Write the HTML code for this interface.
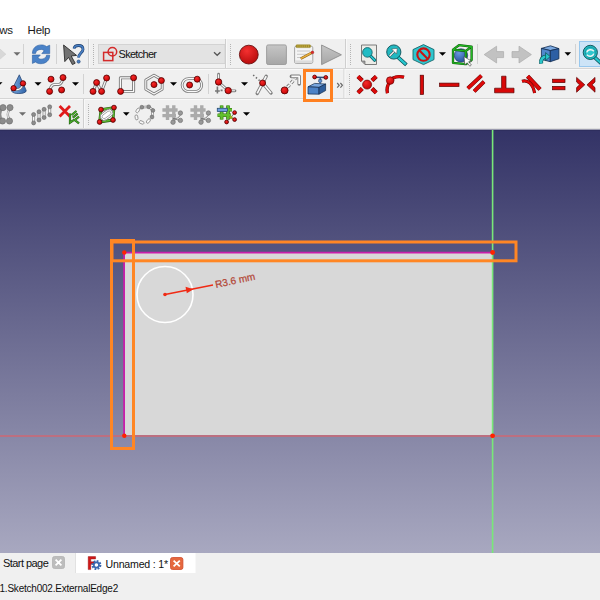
<!DOCTYPE html>
<html><head><meta charset="utf-8">
<style>
html,body{margin:0;padding:0}
body{width:600px;height:600px;overflow:hidden;position:relative;background:#f0f0f0;font-family:"Liberation Sans",sans-serif}
.a{position:absolute}
#menubar{left:0;top:0;width:600px;height:39px;background:#fff}
.mt{position:absolute;font-size:11.5px;color:#1a1a1a;top:23.5px;letter-spacing:-0.25px;white-space:nowrap}
.hl{position:absolute;left:0;width:600px;height:1px;background:#d5d5d5}
.hw{position:absolute;left:0;width:600px;height:1px;background:#f9f9f9}
#view{left:0;top:130px;width:600px;height:423px;border-top:1px solid #2e2e5e;box-sizing:border-box;background:linear-gradient(to bottom,#333366,#a8a8c0)}
svg{position:absolute;overflow:visible}
.tx{position:absolute;white-space:nowrap;color:#000}
</style></head><body>
<div id="menubar" class="a"></div>
<div class="mt" style="left:-7px">ows</div>
<div class="mt" style="left:27.6px">Help</div>
<div class="hl" style="top:68px"></div><div class="hw" style="top:69px"></div>
<div class="hl" style="top:98px"></div><div class="hw" style="top:99px"></div>
<div class="hl" style="top:128px;background:#dedede"></div><div class="hl" style="top:129px;background:#9a9aae"></div>
<div id="view" class="a"></div>
<svg width="600" height="600" style="left:0;top:0" viewBox="0 0 600 600">
  <rect x="124.5" y="252.5" width="368" height="183" fill="#d8d8d8"/>
  <line x1="124" y1="252.6" x2="492" y2="252.6" stroke="#c81eaa" stroke-width="1.6"/>
  <line x1="124.1" y1="252.5" x2="124.1" y2="435.5" stroke="#c81eaa" stroke-width="1.8"/>
  <line x1="0" y1="436" x2="600" y2="436" stroke="#bc6f80" stroke-width="2"/>
  <line x1="492.6" y1="130" x2="492.6" y2="553" stroke="#78e878" stroke-width="1.6"/>
  <circle cx="165" cy="294.5" r="28" fill="none" stroke="#fff" stroke-width="1.6"/>
  <line x1="165" y1="294.5" x2="213" y2="285" stroke="#f02a14" stroke-width="1.5"/>
  <path d="M193.5 289.2 L185.5 286.8 L186.8 293.2 Z" fill="#f02a14"/>
  <circle cx="165" cy="294.5" r="1.8" fill="#f02a14"/>
  <text x="0" y="0" transform="translate(216,288) rotate(-12)" font-family="Liberation Sans" font-size="10" fill="#b34636" stroke="#b34636" stroke-width="0.25">R3.6 mm</text>
  <circle cx="124.3" cy="252.5" r="2.2" fill="#ff2200"/>
  <circle cx="124.3" cy="435.8" r="2.2" fill="#ff2200"/>
  <circle cx="492.6" cy="252.5" r="2.4" fill="#ff2200"/>
  <circle cx="492.6" cy="435.8" r="2.4" fill="#ff2200"/>
  <rect x="111.5" y="240.5" width="22" height="208" fill="none" stroke="#ff8624" stroke-width="3"/>
  <rect x="112" y="242" width="404" height="18.8" fill="none" stroke="#ff8624" stroke-width="3"/>
</svg>
<svg width="600" height="130" style="left:0;top:0" viewBox="0 0 600 130"><polygon points="-4,45.5 5.8,54.2 -4,62.5" fill="#d8d8d8" stroke="#cdcdcd" stroke-width="0.6" stroke-linejoin="round"/><polygon points="13.5,52.2 20.5,52.2 17.0,55.800000000000004" fill="#6e6e6e"/><rect x="23" y="44" width="1" height="20" fill="#d2d2d2"/><path d="M32.4,53.4 C32.4,48 36.4,44.9 41.4,44.9 C43.6,44.9 45.4,45.6 46.6,46.6 L49.7,45.2 L49.7,53.6 L41.8,53.6 L44.2,50.8 C43.4,50 42.4,49.4 41.2,49.4 C38,49.4 35.8,51 35.6,53.4 Z" fill="#4a82c8" stroke="#2d5f9f" stroke-width="0.6" stroke-linejoin="round"/><path d="M49.7,55.2 C49.7,60.6 45.7,63.7 40.7,63.7 C38.5,63.7 36.7,63 35.5,62 L32.4,63.4 L32.4,55 L40.3,55 L37.9,57.8 C38.7,58.6 39.7,59.2 40.9,59.2 C44.1,59.2 46.3,57.6 46.5,55.2 Z" fill="#4a82c8" stroke="#2d5f9f" stroke-width="0.6" stroke-linejoin="round"/><rect x="56" y="44" width="1" height="20" fill="#d2d2d2"/><polygon points="63.6,45 76.6,55.4 71.2,56 75.2,63.2 72.4,64.6 68.6,57.4 64.8,61.6" fill="#727272" stroke="#2c2c2c" stroke-width="0.9" stroke-linejoin="round"/><path d="M74,48.6 C74.4,46.4 76.6,45.5 78.6,45.5 C81.4,45.5 83,47.2 83,49.4 C83,52.4 78.6,53.2 78.6,57.6" fill="none" stroke="#1e3f6e" stroke-width="2.8"/><path d="M74,48.6 C74.4,46.4 76.6,45.5 78.6,45.5 C81.4,45.5 83,47.2 83,49.4 C83,52.4 78.6,53.2 78.6,57.6" fill="none" stroke="#4a80c4" stroke-width="1.7"/><circle cx="78.6" cy="61.6" r="1.6" fill="#4a80c4" stroke="#1e3f6e" stroke-width="0.6"/><rect x="88" y="39" width="1" height="29" fill="#cfcfcf"/><rect x="89" y="39" width="1" height="29" fill="#f8f8f8"/><rect x="93" y="44" width="1" height="1" fill="#b4b4b4"/><rect x="93" y="46" width="1" height="1" fill="#b4b4b4"/><rect x="93" y="48" width="1" height="1" fill="#b4b4b4"/><rect x="93" y="50" width="1" height="1" fill="#b4b4b4"/><rect x="93" y="52" width="1" height="1" fill="#b4b4b4"/><rect x="93" y="54" width="1" height="1" fill="#b4b4b4"/><rect x="93" y="56" width="1" height="1" fill="#b4b4b4"/><rect x="93" y="58" width="1" height="1" fill="#b4b4b4"/><rect x="93" y="60" width="1" height="1" fill="#b4b4b4"/><rect x="93" y="62" width="1" height="1" fill="#b4b4b4"/><rect x="93" y="64" width="1" height="1" fill="#b4b4b4"/><rect x="98.5" y="44.5" width="126.5" height="19" fill="#e3e3e3" stroke="#d3d3d3" stroke-width="1"/><rect x="103.6" y="52.4" width="9.2" height="8.2" fill="none" stroke="#d42a2a" stroke-width="1.5"/><circle cx="112.4" cy="51.8" r="4.3" fill="none" stroke="#d42a2a" stroke-width="1.5"/><polyline points="214,52.2 217.2,55.3 220.4,52.2" fill="none" stroke="#555" stroke-width="1.3"/><rect x="225" y="39" width="1" height="29" fill="#cfcfcf"/><rect x="226" y="39" width="1" height="29" fill="#f8f8f8"/><rect x="230" y="44" width="1" height="1" fill="#b4b4b4"/><rect x="230" y="46" width="1" height="1" fill="#b4b4b4"/><rect x="230" y="48" width="1" height="1" fill="#b4b4b4"/><rect x="230" y="50" width="1" height="1" fill="#b4b4b4"/><rect x="230" y="52" width="1" height="1" fill="#b4b4b4"/><rect x="230" y="54" width="1" height="1" fill="#b4b4b4"/><rect x="230" y="56" width="1" height="1" fill="#b4b4b4"/><rect x="230" y="58" width="1" height="1" fill="#b4b4b4"/><rect x="230" y="60" width="1" height="1" fill="#b4b4b4"/><rect x="230" y="62" width="1" height="1" fill="#b4b4b4"/><rect x="230" y="64" width="1" height="1" fill="#b4b4b4"/><defs><radialGradient id="rbig" cx="0.4" cy="0.3" r="0.8"><stop offset="0" stop-color="#f43030"/><stop offset="1" stop-color="#b00808"/></radialGradient><linearGradient id="gsq" x1="0" y1="0" x2="0" y2="1"><stop offset="0" stop-color="#c6c6c6"/><stop offset="1" stop-color="#a6a6a6"/></linearGradient><radialGradient id="rd" cx="0.38" cy="0.32" r="0.75"><stop offset="0" stop-color="#f62a2a"/><stop offset="1" stop-color="#c20000"/></radialGradient><linearGradient id="cone" x1="0" y1="0" x2="1" y2="0"><stop offset="0" stop-color="#7aaae0"/><stop offset="1" stop-color="#2f63a8"/></linearGradient></defs><circle cx="248.8" cy="54.6" r="9.4" fill="url(#rbig)" stroke="#6a1010" stroke-width="0.9"/><rect x="266.6" y="44.9" width="19.8" height="19.6" rx="1.6" fill="url(#gsq)" stroke="#999" stroke-width="0.9"/><rect x="294.6" y="46.2" width="18.2" height="17.2" rx="1.6" fill="#f4f4f4" stroke="#9c9c9c" stroke-width="0.9"/><rect x="295.1" y="60.4" width="17.2" height="2.6" fill="#dcdcdc"/><rect x="297" y="50.5" width="13" height="1" fill="#c8c8c8"/><rect x="297" y="53.8" width="13" height="1" fill="#c8c8c8"/><rect x="297" y="57" width="8" height="1" fill="#c8c8c8"/><rect x="296" y="44.8" width="14.6" height="2.8" rx="0.8" fill="#c8b040" stroke="#8a7a20" stroke-width="0.5"/><rect x="296.60" y="45.2" width="0.7" height="2" fill="#7a6a18"/><rect x="298.65" y="45.2" width="0.7" height="2" fill="#7a6a18"/><rect x="300.70" y="45.2" width="0.7" height="2" fill="#7a6a18"/><rect x="302.75" y="45.2" width="0.7" height="2" fill="#7a6a18"/><rect x="304.80" y="45.2" width="0.7" height="2" fill="#7a6a18"/><rect x="306.85" y="45.2" width="0.7" height="2" fill="#7a6a18"/><rect x="308.90" y="45.2" width="0.7" height="2" fill="#7a6a18"/><path d="M300.8,58.6 L311.6,52.8" stroke="#8a6018" stroke-width="2.6"/><path d="M300.8,58.6 L311.6,52.8" stroke="#e8b040" stroke-width="1.6"/><circle cx="312.4" cy="52.4" r="1.4" fill="#e02a2a" stroke="#8a1010" stroke-width="0.4"/><polygon points="321.6,45 341.4,54.8 321.6,64.6" fill="url(#gsq)" stroke="#8c8c8c" stroke-width="0.9" stroke-linejoin="round"/><rect x="345" y="39" width="1" height="29" fill="#cfcfcf"/><rect x="346" y="39" width="1" height="29" fill="#f8f8f8"/><rect x="350" y="44" width="1" height="1" fill="#b4b4b4"/><rect x="350" y="46" width="1" height="1" fill="#b4b4b4"/><rect x="350" y="48" width="1" height="1" fill="#b4b4b4"/><rect x="350" y="50" width="1" height="1" fill="#b4b4b4"/><rect x="350" y="52" width="1" height="1" fill="#b4b4b4"/><rect x="350" y="54" width="1" height="1" fill="#b4b4b4"/><rect x="350" y="56" width="1" height="1" fill="#b4b4b4"/><rect x="350" y="58" width="1" height="1" fill="#b4b4b4"/><rect x="350" y="60" width="1" height="1" fill="#b4b4b4"/><rect x="350" y="62" width="1" height="1" fill="#b4b4b4"/><rect x="350" y="64" width="1" height="1" fill="#b4b4b4"/><path d="M361.5,45 L376.5,45 L376.5,64.5 L365,64.5 L361.5,61 Z" fill="#ecece8" stroke="#6e6e6e" stroke-width="0.9"/><path d="M361.5,61 L365,61 L365,64.5" fill="#9a9a9a" stroke="#6e6e6e" stroke-width="0.7"/><path d="M370.6,56 L374.6,60.2" stroke="#0c5a60" stroke-width="3.2" stroke-linecap="round"/><path d="M370.6,56 L374.6,60.2" stroke="#26c4cc" stroke-width="1.8" stroke-linecap="round"/><circle cx="367.4" cy="52.4" r="4.8" fill="#22bcc4" stroke="#0c5a60" stroke-width="0.8"/><path d="M398.4,57.6 L405,63.6" stroke="#0c5058" stroke-width="3.8" stroke-linecap="square"/><path d="M398.4,57.6 L405,63.6" stroke="#28c8d0" stroke-width="2.4" stroke-linecap="square"/><circle cx="393.8" cy="52" r="7.1" fill="#22b8c0" stroke="#0c5058" stroke-width="0.9"/><path d="M389.6,56 L395,50.6" stroke="#444" stroke-width="2.2"/><path d="M389.6,56 L395,50.6" stroke="#fff" stroke-width="1.2"/><polygon points="397.2,48.4 391.6,49 396.6,54" fill="#fff" stroke="#444" stroke-width="0.5"/><polygon points="423.5,44.6 434,49.6 434,59.6 423.5,64.6 413,59.6 413,49.6" fill="#30c6ce" stroke="#16666c" stroke-width="0.9"/><circle cx="423.5" cy="54.6" r="6.2" fill="none" stroke="#c81212" stroke-width="2.1"/><path d="M419.2,50.3 L427.8,58.9" stroke="#c81212" stroke-width="2.1"/><polygon points="439,52.2 446,52.2 442.5,55.800000000000004" fill="#000"/><defs><radialGradient id="sph" cx="0.35" cy="0.3" r="0.8"><stop offset="0" stop-color="#6a9ae0"/><stop offset="1" stop-color="#1e4a94"/></radialGradient></defs><circle cx="461" cy="55.4" r="6.7" fill="url(#sph)" stroke="#1a3060" stroke-width="0.6"/><path d="M453,49.6 L459,45.2 L471.6,46.6 L471.6,60 L465.8,64.2 L453,62.8 Z M453,49.6 L465.8,51 L465.8,64.2 M465.8,51 L471.6,46.6" fill="none" stroke="#0e5e0e" stroke-width="2.3" stroke-linejoin="round"/><path d="M453,49.6 L459,45.2 L471.6,46.6 L471.6,60 L465.8,64.2 L453,62.8 Z M453,49.6 L465.8,51 L465.8,64.2 M465.8,51 L471.6,46.6" fill="none" stroke="#22b822" stroke-width="1.2" stroke-linejoin="round"/><polygon points="464,56.6 471.6,61.2 468.6,61.8 471.4,65 469.8,66.2 467.2,62.8 464.8,64.8" fill="#fff" stroke="#3a3a3a" stroke-width="0.6" stroke-linejoin="round"/><rect x="477" y="44" width="1" height="20" fill="#d2d2d2"/><polygon points="484.2,54.6 496.6,46.2 496.6,51.6 503.6,51.6 503.6,57.6 496.6,57.6 496.6,63" fill="#c2c2c2" stroke="#acacac" stroke-width="0.7" stroke-linejoin="round"/><polygon points="531.4,54.6 519,46.2 519,51.6 512,51.6 512,57.6 519,57.6 519,63" fill="#c2c2c2" stroke="#acacac" stroke-width="0.7" stroke-linejoin="round"/><polygon points="541.4,48.4 550.5,45.8 558.9,48.6 550.3,50.6" fill="#7aa8e0" stroke="#102a4c" stroke-width="0.8" stroke-linejoin="round"/><polygon points="541.4,48.4 550.3,50.6 550.3,61.7 541.4,59.4" fill="#5088cc" stroke="#102a4c" stroke-width="0.8" stroke-linejoin="round"/><polygon points="550.3,50.6 558.9,48.6 558.9,58.8 550.3,61.7" fill="#2d5fa4" stroke="#102a4c" stroke-width="0.8" stroke-linejoin="round"/><path d="M541.2,63.6 C540.4,59.4 542.6,56.6 546.6,56.6" fill="none" stroke="#0a4a4c" stroke-width="4"/><path d="M541.2,63.6 C540.4,59.4 542.6,56.6 546.6,56.6" fill="none" stroke="#2ac6ca" stroke-width="2.8"/><polygon points="545.6,52.6 550.2,56.6 545.6,60.6" fill="#2ac6ca" stroke="#0a4a4c" stroke-width="0.7" stroke-linejoin="round"/><polygon points="564.5,52.2 571.1,52.2 567.8,55.800000000000004" fill="#000"/><rect x="575" y="44" width="1" height="20" fill="#d2d2d2"/><rect x="579.5" y="41.5" width="30" height="25" fill="#cde4f7" stroke="#99c8ee" stroke-width="1"/><path d="M595,57.6 L603,65" stroke="#0c5058" stroke-width="3.8" stroke-linecap="round"/><path d="M595,57.6 L603,65" stroke="#26c4cc" stroke-width="2.3" stroke-linecap="round"/><circle cx="590.3" cy="52.4" r="7.1" fill="#22b8c0" stroke="#0c4c52" stroke-width="0.9"/><circle cx="590.3" cy="52.4" r="5" fill="#2ec6ce" stroke="#13868c" stroke-width="0.7"/><path d="M586.8,52.4 C587.4,49.6 591.8,48.8 593.8,51.2" fill="none" stroke="#f2f2f2" stroke-width="1.5"/><path d="M593.8,53.6 C593.2,56.4 588.8,57.2 586.8,54.8" fill="none" stroke="#f2f2f2" stroke-width="1.5"/><polygon points="-4.5,82.2 2.5,82.2 -1.0,85.8" fill="#000"/><path d="M19.3,74.8 L26.2,90.4 C26.8,94.6 11,94.6 11.6,90.4 Z" fill="url(#cone)" stroke="#1e3c6c" stroke-width="0.7" stroke-linejoin="round"/><path d="M13.6,88.2 C16.6,90.8 21.6,90 23,83.4" fill="none" stroke="#777" stroke-width="2.4"/><path d="M13.6,88.2 C16.6,90.8 21.6,90 23,83.4" fill="none" stroke="#fff" stroke-width="1.2"/><circle cx="13.6" cy="88.2" r="2.7" fill="url(#rd)" stroke="#520000" stroke-width="0.8"/><circle cx="23" cy="83.4" r="2.7" fill="url(#rd)" stroke="#520000" stroke-width="0.8"/><polygon points="34.5,82.2 41.5,82.2 38.0,85.8" fill="#000"/><path d="M49.8,90.6 C50.4,87 52,84.4 55,84.4 L58.8,84.4 C61.2,84.4 62.2,81.6 63,78.4" fill="none" stroke="#7c7c7c" stroke-width="3.0" stroke-linejoin="round" stroke-linecap="round" /><path d="M49.8,90.6 C50.4,87 52,84.4 55,84.4 L58.8,84.4 C61.2,84.4 62.2,81.6 63,78.4" fill="none" stroke="#fafafa" stroke-width="1.2" stroke-linejoin="round" /><circle cx="51" cy="79.2" r="3.0" fill="url(#rd)" stroke="#520000" stroke-width="0.8"/><circle cx="63" cy="77.6" r="3.0" fill="url(#rd)" stroke="#520000" stroke-width="0.8"/><circle cx="49.6" cy="91.4" r="3.0" fill="url(#rd)" stroke="#520000" stroke-width="0.8"/><circle cx="61.6" cy="90" r="3.0" fill="url(#rd)" stroke="#520000" stroke-width="0.8"/><polygon points="72,82.2 79,82.2 75.5,85.8" fill="#000"/><rect x="83" y="74" width="1" height="20" fill="#d2d2d2"/><path d="M93,91.4 L96.6,82.6 L101.6,91.4 L106.6,78" fill="none" stroke="#7c7c7c" stroke-width="3.0" stroke-linejoin="round" stroke-linecap="round" /><path d="M93,91.4 L96.6,82.6 L101.6,91.4 L106.6,78" fill="none" stroke="#fafafa" stroke-width="1.25" stroke-linejoin="round" /><circle cx="96.6" cy="82.6" r="3.0" fill="url(#rd)" stroke="#520000" stroke-width="0.8"/><circle cx="106.6" cy="78" r="3.0" fill="url(#rd)" stroke="#520000" stroke-width="0.8"/><circle cx="93" cy="91.4" r="3.0" fill="url(#rd)" stroke="#520000" stroke-width="0.8"/><circle cx="101.6" cy="91.4" r="3.0" fill="url(#rd)" stroke="#520000" stroke-width="0.8"/><path d="M120.4,77.8 L133.6,77.8 L133.6,91.6 L120.4,91.6 Z" fill="none" stroke="#7c7c7c" stroke-width="3" stroke-linejoin="round" stroke-linecap="round" /><path d="M120.4,77.8 L133.6,77.8 L133.6,91.6 L120.4,91.6 Z" fill="none" stroke="#fafafa" stroke-width="1.2" stroke-linejoin="round" /><circle cx="133.6" cy="77.8" r="3.0" fill="url(#rd)" stroke="#520000" stroke-width="0.8"/><circle cx="120.6" cy="91.4" r="3.0" fill="url(#rd)" stroke="#520000" stroke-width="0.8"/><path d="M154,75.2 L162.2,80 L162.2,89.2 L154,94 L145.8,89.2 L145.8,80 Z" fill="none" stroke="#7c7c7c" stroke-width="2.8" stroke-linejoin="round" stroke-linecap="round" /><path d="M154,75.2 L162.2,80 L162.2,89.2 L154,94 L145.8,89.2 L145.8,80 Z" fill="none" stroke="#fafafa" stroke-width="1.1" stroke-linejoin="round" /><circle cx="154" cy="84.6" r="3.0" fill="url(#rd)" stroke="#520000" stroke-width="0.8"/><circle cx="161.4" cy="80.6" r="3.0" fill="url(#rd)" stroke="#520000" stroke-width="0.8"/><polygon points="170,82.2 177,82.2 173.5,85.8" fill="#000"/><path d="M188.6,78.6 L195.2,78.6 A6.5,6.5 0 0 1 195.2,91.6 L188.6,91.6 A6.5,6.5 0 0 1 188.6,78.6 Z" fill="none" stroke="#7c7c7c" stroke-width="2.8" stroke-linejoin="round" stroke-linecap="round" /><path d="M188.6,78.6 L195.2,78.6 A6.5,6.5 0 0 1 195.2,91.6 L188.6,91.6 A6.5,6.5 0 0 1 188.6,78.6 Z" fill="none" stroke="#fafafa" stroke-width="1.1" stroke-linejoin="round" /><circle cx="189.6" cy="85" r="3.0" fill="url(#rd)" stroke="#520000" stroke-width="0.8"/><circle cx="197.2" cy="79.2" r="3.0" fill="url(#rd)" stroke="#520000" stroke-width="0.8"/><rect x="208" y="74" width="1" height="20" fill="#d2d2d2"/><path d="M218.6,74.2 L218.6,82 L228.2,90.8 L235,90.8" fill="none" stroke="#7c7c7c" stroke-width="2.8" stroke-linejoin="round" stroke-linecap="round" /><path d="M218.6,74.2 L218.6,82 L228.2,90.8 L235,90.8" fill="none" stroke="#fafafa" stroke-width="1.1" stroke-linejoin="round" /><path d="M217.4,86.6 L217.4,93.4 M215,91 L219.8,91 M220.6,90.4 L222.6,90.4" stroke="#777" stroke-width="1.6"/><circle cx="218.6" cy="82" r="3.2" fill="url(#rd)" stroke="#520000" stroke-width="0.8"/><circle cx="228.2" cy="90.6" r="3.2" fill="url(#rd)" stroke="#520000" stroke-width="0.8"/><polygon points="241,82.2 248,82.2 244.5,85.8" fill="#000"/><path d="M257.2,93.4 L266.2,76.2" fill="none" stroke="#7c7c7c" stroke-width="3.4" stroke-linejoin="round" stroke-linecap="round" /><path d="M257.2,93.4 L266.2,76.2" fill="none" stroke="#fafafa" stroke-width="1.7" stroke-linejoin="round" /><path d="M262.6,83 L271,93" fill="none" stroke="#7c7c7c" stroke-width="3.4" stroke-linejoin="round" stroke-linecap="round" /><path d="M262.6,83 L271,93" fill="none" stroke="#fafafa" stroke-width="1.7" stroke-linejoin="round" /><path d="M253.2,75 L260,81" stroke="#6a6a6a" stroke-width="1.6" stroke-dasharray="1.4,2.2"/><circle cx="262.6" cy="83" r="3.0" fill="url(#rd)" stroke="#520000" stroke-width="0.8"/><path d="M287.4,87.2 L296,77.6" fill="none" stroke="#7c7c7c" stroke-width="3.4" stroke-linejoin="round" stroke-linecap="butt" stroke-dasharray="3.4,2"/><path d="M287.4,87.2 L296,77.6" fill="none" stroke="#fafafa" stroke-width="1.6" stroke-linejoin="round" stroke-dasharray="3.4,2"/><path d="M291.4,76.4 L299.2,76.4 L299.2,84" fill="none" stroke="#7c7c7c" stroke-width="3.6" stroke-linejoin="round" stroke-linecap="round" /><path d="M291.4,76.4 L299.2,76.4 L299.2,84" fill="none" stroke="#fafafa" stroke-width="1.8" stroke-linejoin="round" /><circle cx="284.6" cy="90.4" r="3.5" fill="url(#rd)" stroke="#520000" stroke-width="0.8"/><rect x="304.5" y="70.5" width="27" height="30" fill="#eef0f2" stroke="#ff8020" stroke-width="3"/><polygon points="308,86.8 314.6,83.4 325.6,84 319,87.4" fill="#78a6de" stroke="#102a4c" stroke-width="0.7" stroke-linejoin="round"/><polygon points="308,86.8 319,87.4 319,94.2 308,94" fill="#4c82c6" stroke="#102a4c" stroke-width="0.7" stroke-linejoin="round"/><polygon points="319,87.4 325.6,84 325.6,90.6 319,94.2" fill="#2e5e9c" stroke="#102a4c" stroke-width="0.7" stroke-linejoin="round"/><path d="M315,77.2 L325.6,77.6" stroke="#2a4a78" stroke-width="1.5"/><path d="M320.2,77.4 L320.2,83.6" stroke="#2a4a78" stroke-width="1.3"/><polygon points="318.8,79.4 321.6,79.4 322,81.6 320.2,83 318.4,81.6" fill="#5a8ed0" stroke="#1e3a66" stroke-width="0.5"/><circle cx="314.6" cy="77" r="1.9" fill="url(#rd)" stroke="#520000" stroke-width="0.8"/><circle cx="325.8" cy="77.4" r="1.9" fill="url(#rd)" stroke="#520000" stroke-width="0.8"/><path d="M337.2,83 L339.2,85.3 L337.2,87.6 M340.4,83 L342.4,85.3 L340.4,87.6" fill="none" stroke="#6a6a6a" stroke-width="1.2"/><rect x="343.5" y="69" width="1" height="29" fill="#cfcfcf"/><rect x="344.5" y="69" width="1" height="29" fill="#f8f8f8"/><rect x="349" y="74" width="1" height="1" fill="#b4b4b4"/><rect x="349" y="76" width="1" height="1" fill="#b4b4b4"/><rect x="349" y="78" width="1" height="1" fill="#b4b4b4"/><rect x="349" y="80" width="1" height="1" fill="#b4b4b4"/><rect x="349" y="82" width="1" height="1" fill="#b4b4b4"/><rect x="349" y="84" width="1" height="1" fill="#b4b4b4"/><rect x="349" y="86" width="1" height="1" fill="#b4b4b4"/><rect x="349" y="88" width="1" height="1" fill="#b4b4b4"/><rect x="349" y="90" width="1" height="1" fill="#b4b4b4"/><rect x="349" y="92" width="1" height="1" fill="#b4b4b4"/><rect x="349" y="94" width="1" height="1" fill="#b4b4b4"/><path d="M358,76.4 L362.2,80.6" fill="none" stroke="#5a0000" stroke-width="4.2" stroke-linecap="butt"/><path d="M358,76.4 L362.2,80.6" fill="none" stroke="#dd0a0a" stroke-width="3.3" stroke-linecap="butt"/><path d="M376.2,76.4 L372,80.6" fill="none" stroke="#5a0000" stroke-width="4.2" stroke-linecap="butt"/><path d="M376.2,76.4 L372,80.6" fill="none" stroke="#dd0a0a" stroke-width="3.3" stroke-linecap="butt"/><path d="M358,92.8 L362.2,88.6" fill="none" stroke="#5a0000" stroke-width="4.2" stroke-linecap="butt"/><path d="M358,92.8 L362.2,88.6" fill="none" stroke="#dd0a0a" stroke-width="3.3" stroke-linecap="butt"/><path d="M376.2,92.8 L372,88.6" fill="none" stroke="#5a0000" stroke-width="4.2" stroke-linecap="butt"/><path d="M376.2,92.8 L372,88.6" fill="none" stroke="#dd0a0a" stroke-width="3.3" stroke-linecap="butt"/><circle cx="367.1" cy="84.6" r="4.5" fill="url(#rd)" stroke="#6a0000" stroke-width="0.7"/><path d="M387.4,93.2 C386.4,89 387.4,85 390.2,81" fill="none" stroke="#5a0000" stroke-width="3.3" stroke-linecap="butt"/><path d="M387.4,93.2 C386.4,89 387.4,85 390.2,81" fill="none" stroke="#dd0a0a" stroke-width="2.4" stroke-linecap="butt"/><path d="M392.6,78.2 C395.6,76.6 399.4,76 404,77.2" fill="none" stroke="#5a0000" stroke-width="3.3" stroke-linecap="butt"/><path d="M392.6,78.2 C395.6,76.6 399.4,76 404,77.2" fill="none" stroke="#dd0a0a" stroke-width="2.4" stroke-linecap="butt"/><circle cx="390.2" cy="80.6" r="3.8" fill="url(#rd)" stroke="#6a0000" stroke-width="0.7"/><rect x="420.2" y="75.2" width="3.4" height="19.2" fill="#d80808" stroke="#5a0000" stroke-width="0.7"/><rect x="439.6" y="83.1" width="19.4" height="3.4" fill="#d80808" stroke="#5a0000" stroke-width="0.7"/><path d="M467.8,88.4 L481.4,75.6" fill="none" stroke="#5a0000" stroke-width="3.9" stroke-linecap="butt"/><path d="M467.8,88.4 L481.4,75.6" fill="none" stroke="#dd0a0a" stroke-width="3.0" stroke-linecap="butt"/><path d="M474.2,91.4 L484,81.6" fill="none" stroke="#5a0000" stroke-width="3.9" stroke-linecap="butt"/><path d="M474.2,91.4 L484,81.6" fill="none" stroke="#dd0a0a" stroke-width="3.0" stroke-linecap="butt"/><polygon points="501.6,76.2 506,76.2 506,88.2 514,88.2 514,92.8 494.6,92.8 494.6,88.2 501.6,88.2" fill="#d80808" stroke="#5a0000" stroke-width="0.7"/><path d="M527.6,76.2 L540,89.4" fill="none" stroke="#5a0000" stroke-width="4.3" stroke-linecap="butt"/><path d="M527.6,76.2 L540,89.4" fill="none" stroke="#dd0a0a" stroke-width="3.4" stroke-linecap="butt"/><path d="M522,81.2 C528,79.6 533,84 534.6,93" fill="none" stroke="#5a0000" stroke-width="3.1" stroke-linecap="butt"/><path d="M522,81.2 C528,79.6 533,84 534.6,93" fill="none" stroke="#dd0a0a" stroke-width="2.2" stroke-linecap="butt"/><rect x="552.6" y="79.2" width="12.4" height="3.4" fill="#d80808" stroke="#5a0000" stroke-width="0.7"/><rect x="552.6" y="86.4" width="12.4" height="3.4" fill="#d80808" stroke="#5a0000" stroke-width="0.7"/><polygon points="576.6,77.4 584.8,84.8 576.6,92.2 576.6,87.6 579.6,84.8 576.6,82" fill="#d80808" stroke="#5a0000" stroke-width="0.7" stroke-linejoin="round"/><polygon points="595,77.4 587,84.8 595,92.2 595,87.6 592,84.8 595,82" fill="#d80808" stroke="#5a0000" stroke-width="0.7" stroke-linejoin="round"/><path d="M3,107.6 C-1.4,110 -1.4,118 2.5,121" fill="none" stroke="#8c8c8c" stroke-width="3.4"/><path d="M9.6,109.6 C7.2,112 7.2,116.6 9.4,119.2" fill="none" stroke="#9a9a9a" stroke-width="2.4" stroke-linejoin="round" stroke-linecap="round" /><path d="M9.6,109.6 C7.2,112 7.2,116.6 9.4,119.2" fill="none" stroke="#fafafa" stroke-width="1.0" stroke-linejoin="round" /><circle cx="3" cy="107.6" r="3.1" fill="#8c8c8c" stroke="#6a6a6a" stroke-width="0.6"/><circle cx="10" cy="107.6" r="3.1" fill="#8c8c8c" stroke="#6a6a6a" stroke-width="0.6"/><circle cx="2.5" cy="121" r="3.1" fill="#8c8c8c" stroke="#6a6a6a" stroke-width="0.6"/><circle cx="9.5" cy="121" r="3.1" fill="#8c8c8c" stroke="#6a6a6a" stroke-width="0.6"/><polygon points="19,112.2 26,112.2 22.5,115.8" fill="#6e6e6e"/><path d="M33.6,114.5 L33.6,122.9" fill="none" stroke="#8a8a8a" stroke-width="3.0" stroke-linejoin="round" stroke-linecap="round" /><path d="M33.6,114.5 L33.6,122.9" fill="none" stroke="#fafafa" stroke-width="1.4" stroke-linejoin="round" /><circle cx="33.6" cy="114.5" r="2.0" fill="#8c8c8c" stroke="#6a6a6a" stroke-width="0.6"/><circle cx="33.6" cy="122.9" r="2.0" fill="#8c8c8c" stroke="#6a6a6a" stroke-width="0.6"/><path d="M39,111.7 L39,120" fill="none" stroke="#8a8a8a" stroke-width="3.0" stroke-linejoin="round" stroke-linecap="round" /><path d="M39,111.7 L39,120" fill="none" stroke="#fafafa" stroke-width="1.4" stroke-linejoin="round" /><circle cx="39" cy="111.7" r="2.0" fill="#8c8c8c" stroke="#6a6a6a" stroke-width="0.6"/><circle cx="39" cy="120" r="2.0" fill="#8c8c8c" stroke="#6a6a6a" stroke-width="0.6"/><path d="M44.1,109.3 L44.1,117.6" fill="none" stroke="#8a8a8a" stroke-width="3.0" stroke-linejoin="round" stroke-linecap="round" /><path d="M44.1,109.3 L44.1,117.6" fill="none" stroke="#fafafa" stroke-width="1.4" stroke-linejoin="round" /><circle cx="44.1" cy="109.3" r="2.0" fill="#8c8c8c" stroke="#6a6a6a" stroke-width="0.6"/><circle cx="44.1" cy="117.6" r="2.0" fill="#8c8c8c" stroke="#6a6a6a" stroke-width="0.6"/><path d="M49.7,106.8 L49.7,114.8" fill="none" stroke="#8a8a8a" stroke-width="3.0" stroke-linejoin="round" stroke-linecap="round" /><path d="M49.7,106.8 L49.7,114.8" fill="none" stroke="#fafafa" stroke-width="1.4" stroke-linejoin="round" /><circle cx="49.7" cy="106.8" r="2.0" fill="#8c8c8c" stroke="#6a6a6a" stroke-width="0.6"/><circle cx="49.7" cy="114.8" r="2.0" fill="#8c8c8c" stroke="#6a6a6a" stroke-width="0.6"/><path d="M59.6,106 L70,116.6 M70,106 L59.6,116.6" stroke="#e01a1a" stroke-width="2.8"/><path d="M71.6,115 L76.4,111 M72.8,117.6 L77.6,113.6 M70,113.4 L70,122.6 L74.4,119.6 M79,116.6 L74.8,120 L79,123.4" fill="none" stroke="#1e5a10" stroke-width="2.2"/><path d="M71.6,115 L76.4,111 M72.8,117.6 L77.6,113.6 M70,113.4 L70,122.6 L74.4,119.6 M79,116.6 L74.8,120 L79,123.4" fill="none" stroke="#4cb02a" stroke-width="1.1"/><rect x="83" y="99" width="1" height="29" fill="#cfcfcf"/><rect x="84" y="99" width="1" height="29" fill="#f8f8f8"/><rect x="88" y="104" width="1" height="1" fill="#b4b4b4"/><rect x="88" y="106" width="1" height="1" fill="#b4b4b4"/><rect x="88" y="108" width="1" height="1" fill="#b4b4b4"/><rect x="88" y="110" width="1" height="1" fill="#b4b4b4"/><rect x="88" y="112" width="1" height="1" fill="#b4b4b4"/><rect x="88" y="114" width="1" height="1" fill="#b4b4b4"/><rect x="88" y="116" width="1" height="1" fill="#b4b4b4"/><rect x="88" y="118" width="1" height="1" fill="#b4b4b4"/><rect x="88" y="120" width="1" height="1" fill="#b4b4b4"/><rect x="88" y="122" width="1" height="1" fill="#b4b4b4"/><rect x="88" y="124" width="1" height="1" fill="#b4b4b4"/><polygon points="101,109.6 114,107.6 113,120 99.6,122" fill="#f2f2f2" stroke="#2a5a14" stroke-width="2.8" stroke-linejoin="round"/><polygon points="101,109.6 114,107.6 113,120 99.6,122" fill="none" stroke="#5cb830" stroke-width="1.7" stroke-linejoin="round"/><g transform="rotate(-36 106.6 114.8)"><rect x="99.8" y="111" width="13.6" height="7.6" rx="3.8" fill="#fff" stroke="#8a8a8a" stroke-width="0.9"/><rect x="101.6" y="112.8" width="10" height="4" rx="2" fill="none" stroke="#9a9a9a" stroke-width="0.8"/></g><circle cx="101" cy="109.6" r="2.4" fill="url(#rd)" stroke="#520000" stroke-width="0.8"/><circle cx="114" cy="107.6" r="2.4" fill="url(#rd)" stroke="#520000" stroke-width="0.8"/><circle cx="113" cy="120" r="2.4" fill="url(#rd)" stroke="#520000" stroke-width="0.8"/><circle cx="99.6" cy="122" r="2.4" fill="url(#rd)" stroke="#520000" stroke-width="0.8"/><polygon points="123,112.2 129.6,112.2 126.3,115.8" fill="#000"/><path d="M141.8,107.2 L148.7,106.8 L152.9,110.2 L152,117" fill="none" stroke="#8a8a8a" stroke-width="2.6" stroke-linejoin="round" stroke-linecap="round" /><path d="M141.8,107.2 L148.7,106.8 L152.9,110.2 L152,117" fill="none" stroke="#fafafa" stroke-width="1.1" stroke-linejoin="round" /><rect x="135.3" y="109.05000000000001" width="5" height="2.7" rx="1.35" transform="rotate(-58 137.8 110.4)" fill="#f8f8f8" stroke="#8a8a8a" stroke-width="0.8"/><rect x="134.0" y="116.05000000000001" width="5" height="2.7" rx="1.35" transform="rotate(80 136.5 117.4)" fill="#f8f8f8" stroke="#8a8a8a" stroke-width="0.8"/><rect x="139.1" y="121.05000000000001" width="5" height="2.7" rx="1.35" transform="rotate(22 141.6 122.4)" fill="#f8f8f8" stroke="#8a8a8a" stroke-width="0.8"/><rect x="145.9" y="119.65" width="5" height="2.7" rx="1.35" transform="rotate(-52 148.4 121)" fill="#f8f8f8" stroke="#8a8a8a" stroke-width="0.8"/><circle cx="141.8" cy="107.2" r="1.9" fill="#8c8c8c" stroke="#6a6a6a" stroke-width="0.6"/><circle cx="148.7" cy="106.8" r="1.9" fill="#8c8c8c" stroke="#6a6a6a" stroke-width="0.6"/><circle cx="152.9" cy="110.4" r="1.9" fill="#8c8c8c" stroke="#6a6a6a" stroke-width="0.6"/><circle cx="152" cy="117" r="1.9" fill="#8c8c8c" stroke="#6a6a6a" stroke-width="0.6"/><path d="M167.5,105.2 L167.5,120 M173.8,105.2 L173.8,122 M162.4,110 L177.6,110 M162.4,115.6 L176,115.6" stroke="#ababab" stroke-width="3.4"/><path d="M173,118.6 C176,119 179,118 180.4,115 M173,118.6 L180.4,120.6" fill="none" stroke="#777" stroke-width="0.9"/><circle cx="180.4" cy="113" r="2.2" fill="#999999" stroke="#6a6a6a" stroke-width="0.6"/><circle cx="180.4" cy="120.4" r="2.2" fill="#999999" stroke="#6a6a6a" stroke-width="0.6"/><circle cx="173" cy="122.2" r="2.2" fill="#999999" stroke="#6a6a6a" stroke-width="0.6"/><path d="M195.5,105.2 L195.5,120 M201.8,105.2 L201.8,122 M190.4,110 L205.6,110 M190.4,115.6 L204,115.6" stroke="#ababab" stroke-width="3.4"/><path d="M201,118.6 C204,119 207,118 208.4,115 M201,118.6 L208.4,120.6" fill="none" stroke="#777" stroke-width="0.9"/><circle cx="208.4" cy="113" r="2.2" fill="#999999" stroke="#6a6a6a" stroke-width="0.6"/><circle cx="208.4" cy="120.4" r="2.2" fill="#999999" stroke="#6a6a6a" stroke-width="0.6"/><circle cx="201" cy="122.2" r="2.2" fill="#999999" stroke="#6a6a6a" stroke-width="0.6"/><path d="M221.6,105.4 L221.6,119.6 M228,105.4 L228,119.6 M217.6,109.8 L232,109.8 M217.6,115.2 L231,115.2" stroke="#2e6a10" stroke-width="3.6"/><path d="M221.6,105.4 L221.6,119.6 M228,105.4 L228,119.6 M217.6,109.8 L232,109.8 M217.6,115.2 L231,115.2" stroke="#62c02e" stroke-width="2.4"/><rect x="217.2" y="108.2" width="10.2" height="3.4" fill="#6e9ee0" stroke="#1c3a6a" stroke-width="0.6"/><path d="M226.6,121.6 L231,117.4 L234.6,112.6 M231,117.4 L234.6,119.6" fill="none" stroke="#555" stroke-width="0.8"/><circle cx="231" cy="117.4" r="1.6" fill="#9aaa20"/><circle cx="234.6" cy="112.6" r="1.9" fill="url(#rd)" stroke="#520000" stroke-width="0.8"/><circle cx="234.6" cy="119.6" r="1.9" fill="url(#rd)" stroke="#520000" stroke-width="0.8"/><circle cx="226.6" cy="122" r="1.9" fill="url(#rd)" stroke="#520000" stroke-width="0.8"/><polygon points="243,112.2 250,112.2 246.5,115.8" fill="#000"/></svg>
<div class="tx" style="left:118.5px;top:48px;font-size:11px;letter-spacing:-0.7px;color:#111">Sketcher</div>
<svg width="600" height="600" style="left:0;top:0" viewBox="0 0 600 600">
  <rect x="75.5" y="553" width="120" height="20" fill="#fff"/>
  <rect x="75" y="553" width="1" height="20" fill="#e2e2e2"/>
  <rect x="52.5" y="556.5" width="12" height="12" rx="2" fill="#bdbdbd" stroke="#b2b2b2" stroke-width="0.8"/>
  <path d="M55.6,559.6 L61.4,565.4 M61.4,559.6 L55.6,565.4" stroke="#fff" stroke-width="1.8"/>
  <rect x="170.5" y="557.5" width="12.4" height="12" rx="2" fill="#e5683e" stroke="#d24a2a" stroke-width="0.8"/>
  <path d="M173.6,560.6 L179.8,566.4 M179.8,560.6 L173.6,566.4" stroke="#fff" stroke-width="1.8"/>
  <path d="M88.2,556.6 L95.6,556.6 L95.6,559 L90.8,559 L90.8,561.8 L94,561.8 L94,564.2 L90.8,564.2 L90.8,569.6 L88.2,569.6 Z" fill="#d01818" stroke="#8a0a0a" stroke-width="0.4"/>
  <circle cx="96.4" cy="565" r="3.6" fill="none" stroke="#3a68b0" stroke-width="2.8" stroke-dasharray="1.6,1.2"/>
  <circle cx="96.4" cy="565" r="2.6" fill="none" stroke="#3a68b0" stroke-width="1.6"/>
</svg>
<div class="tx" style="left:3px;top:556.5px;font-size:11px;letter-spacing:-0.55px;color:#111">Start page</div>
<div class="tx" style="left:105.5px;top:557.5px;font-size:10.6px;letter-spacing:-0.2px;color:#111">Unnamed : 1*</div>
<div class="tx" style="left:-0.5px;top:583px;font-size:10px;letter-spacing:-0.22px;color:#111">1.Sketch002.ExternalEdge2</div>
</body></html>
